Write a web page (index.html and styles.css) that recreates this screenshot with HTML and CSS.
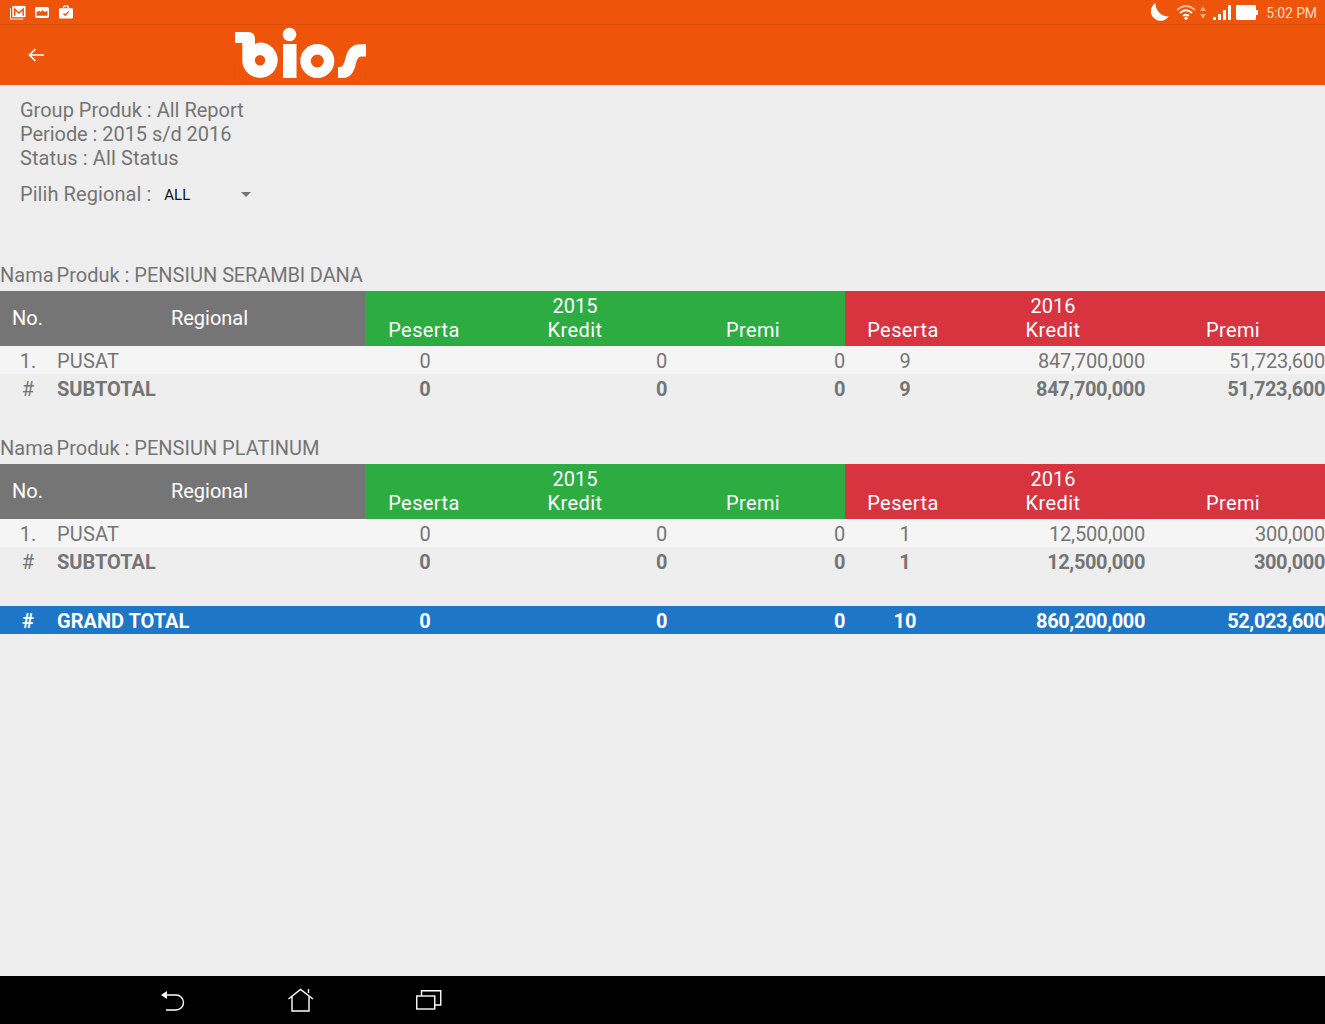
FILE: index.html
```html
<!DOCTYPE html>
<html lang="en">
<head>
    <meta charset="UTF-8">
    <meta name="viewport" content="width=device-width, initial-scale=1.0">
    <title>Bios Report</title>
    <link rel="stylesheet" href="styles.css">
</head>
<body>

    <div class="status-bar">
        <div class="status-left">
            <svg class="ico-mail" width="16" height="15" viewBox="0 0 17 15">
                <path d="M0.5 3 V14.5 H14" fill="none" stroke="#fff"/>
                <rect x="2.5" y="0.5" width="14" height="12" fill="#fff"/>
                <path d="M5 11 V4 L9.5 8 L14 4 V11" fill="none" stroke="#ee550a" stroke-width="1.6"/>
            </svg>
            <svg class="ico-photo" width="14" height="11" viewBox="0 0 15 12">
                <rect width="15" height="12" rx="1.5" fill="#fff"/>
                <path d="M1.5 9.5 V6 L4 4 L6 5.5 L8 3.5 L10.5 5.5 L13.5 4 V9.5 Z" fill="#ee550a"/>
            </svg>
            <svg class="ico-bag" width="14" height="14" viewBox="0 0 15 15">
                <path d="M5 3.5 V2.5 Q5 1 6.5 1 H8.5 Q10 1 10 2.5 V3.5" fill="none" stroke="#fff" stroke-width="1.4"/>
                <rect y="3.5" width="15" height="11" rx="1" fill="#fff"/>
                <path d="M4.8 9 L6.8 11 L10.4 6.8" fill="none" stroke="#ee550a" stroke-width="1.5"/>
            </svg>
        </div>
        <div class="status-right">
            <svg width="20" height="20" viewBox="0 0 20 20">
                <path d="M6.5 1 A9.6 9.6 0 1 0 19.5 14.5 A13 13 0 0 1 6.5 1 Z" fill="#fff"/>
            </svg>
            <svg class="ico-wifi" width="20" height="16" viewBox="0 0 20 16">
                <path d="M1 6 Q10 -2 19 6" fill="none" stroke="#f8b68f" stroke-width="1.8"/>
                <path d="M4 9 Q10 3.5 16 9" fill="none" stroke="#fff" stroke-width="1.8"/>
                <path d="M7 12 Q10 9.5 13 12" fill="none" stroke="#fff" stroke-width="1.8"/>
                <circle cx="10" cy="14.2" r="1.6" fill="#fff"/>
            </svg>
            <svg class="ico-arrows" width="6" height="13" viewBox="0 0 6 13">
                <path d="M3 0 L6 5 H0 Z M3 13 L6 8 H0 Z" fill="#f8a878"/>
            </svg>
            <svg class="ico-signal" width="19" height="15" viewBox="0 0 19 15">
                <rect x="0" y="12" width="3" height="3" fill="#fff"/>
                <rect x="5" y="9" width="3" height="6" fill="#fff"/>
                <rect x="10" y="5" width="3" height="10" fill="#fff"/>
                <rect x="15" y="0" width="3" height="15" fill="#fff"/>
            </svg>
            <svg class="ico-battery" width="22" height="15" viewBox="0 0 22 15">
                <rect width="20" height="15" rx="1" fill="#fff"/>
                <rect x="20" y="5" width="2" height="5" fill="#fff"/>
            </svg>
            <span class="clock">5:02 PM</span>
        </div>
    </div>

    <div class="app-bar">
        <svg class="back-arrow" width="16" height="14" viewBox="0 0 16 14">
            <path d="M16 7 H1.5 M7.5 1 L1.5 7 L7.5 13" fill="none" stroke="#fff" stroke-width="1.7"/>
        </svg>
        <svg class="logo" width="134" height="60" viewBox="234 25 134 60">
            <path d="M234.5 60 V72 Q234.5 82 244 82 H357 Q366.5 82 366.5 72 V60" fill="none" stroke="#ea540a"/>
            <path fill="#fff" fill-rule="evenodd" d="M235 31 H248 Q255 31 255 38 V43 Q257.5 41.5 260 41.5 A17.7 17.7 0 1 1 242.3 59.2 V42 H235 Z M260 54 A5.2 5.2 0 1 0 260 64.4 A5.2 5.2 0 1 0 260 54 Z"/>
            <circle cx="289.5" cy="33.5" r="6.8" fill="#fff"/>
            <rect x="283" y="43" width="13.5" height="34" fill="#fff"/>
            <path fill="#fff" fill-rule="evenodd" d="M317.3 43 A17 17 0 1 0 317.3 77 A17 17 0 1 0 317.3 43 Z M317.3 53.5 A6.5 6.5 0 1 1 317.3 66.5 A6.5 6.5 0 1 1 317.3 53.5 Z"/>
            <path fill="#fff" d="M366 43 V55.5 H361 Q357.5 56 356 62 Q353 77 343 77 H338 V66 H340 Q343.5 65.5 345 59 Q348 44 358 43.5 Z"/>
        </svg>
    </div>

    <div class="content">
        <div class="filter-info">
            <div>Group Produk : All Report</div>
            <div class="periode">Periode : 2015 s/d 2016</div>
            <div class="status-line">Status : All Status</div>
            <div class="region-row">
                <span class="region-label">Pilih Regional :</span>
                <span class="region-select">ALL<i class="caret"></i></span>
            </div>
        </div>

        <div class="product-name first"><span class="tight">Nama</span> Produk : PENSIUN <span class="squeeze">SERAMBI DANA</span></div>
        <div class="report-head">
            <div class="head-fixed"><span class="head-no">No.</span><span class="head-reg">Regional</span></div>
            <div class="head-year y2015">
                <span></span><span>2015</span><span></span>
                <span class="sub">Peserta</span><span class="sub">Kredit</span><span class="sub">Premi</span>
            </div>
            <div class="head-year y2016">
                <span></span><span>2016</span><span></span>
                <span class="sub">Peserta</span><span class="sub">Kredit</span><span class="sub">Premi</span>
            </div>
        </div>
        <div class="row">
            <span class="c">1.</span><span class="region">PUSAT</span><span class="c">0</span><span class="r">0</span><span class="r">0</span>
            <span class="c">9</span><span class="r">847,700,000</span><span class="r">51,723,600</span>
        </div>
        <div class="row subtotal">
            <span class="c">#</span><span>SUBTOTAL</span><span class="c">0</span><span class="r">0</span><span class="r">0</span>
            <span class="c">9</span><span class="r">847,700,000</span><span class="r">51,723,600</span>
        </div>

        <div class="product-name"><span class="tight">Nama</span> Produk : PENSIUN PLATINUM</div>
        <div class="report-head">
            <div class="head-fixed"><span class="head-no">No.</span><span class="head-reg">Regional</span></div>
            <div class="head-year y2015">
                <span></span><span>2015</span><span></span>
                <span class="sub">Peserta</span><span class="sub">Kredit</span><span class="sub">Premi</span>
            </div>
            <div class="head-year y2016">
                <span></span><span>2016</span><span></span>
                <span class="sub">Peserta</span><span class="sub">Kredit</span><span class="sub">Premi</span>
            </div>
        </div>
        <div class="row">
            <span class="c">1.</span><span class="region">PUSAT</span><span class="c">0</span><span class="r">0</span><span class="r">0</span>
            <span class="c">1</span><span class="r">12,500,000</span><span class="r">300,000</span>
        </div>
        <div class="row subtotal">
            <span class="c">#</span><span>SUBTOTAL</span><span class="c">0</span><span class="r">0</span><span class="r">0</span>
            <span class="c">1</span><span class="r">12,500,000</span><span class="r">300,000</span>
        </div>

        <div class="row grand">
            <span class="c">#</span><span>GRAND TOTAL</span><span class="c">0</span><span class="r">0</span><span class="r">0</span>
            <span class="c">10</span><span class="r">860,200,000</span><span class="r">52,023,600</span>
        </div>
    </div>

    <div class="nav-bar">
        <svg width="26" height="24" viewBox="0 0 26 24">
            <path d="M1 7 L7 3 V11 Z" fill="#fff"/>
            <path d="M7 7 H16 A7.5 7.5 0 0 1 16 22 H6" fill="none" stroke="#fff" stroke-width="1.4"/>
        </svg>
        <svg width="26" height="24" viewBox="0 0 26 24">
            <path d="M0.5 11 L12.5 1.5 L25 11 M4 8.5 V23 H21 V8.5 M20.5 1 V5" fill="none" stroke="#fff" stroke-width="1.4"/>
        </svg>
        <svg width="26" height="24" viewBox="0 0 26 24">
            <rect x="0.75" y="8" width="18" height="13" fill="none" stroke="#fff" stroke-width="1.4"/>
            <path d="M5.5 8 V2.75 H24.75 V17 H19" fill="none" stroke="#fff" stroke-width="1.4"/>
        </svg>
    </div>

</body>
</html>
```

FILE: styles.css
```css
body {
    margin: 0;
    height: 1024px;
    overflow: hidden;
    display: flex;
    flex-direction: column;
    background-color: #eeeeee;
    color: #757575;
    font-family: Roboto, sans-serif;
    font-size: 20px;
    line-height: 24px;
}
.status-bar {
    height: 25px;
    box-sizing: border-box;
    border-bottom: 1px solid #d94e09;
    background-color: #ee550a;
    display: flex;
    justify-content: space-between;
    align-items: center;
    padding: 0 8px 0 10px;
}
.status-left {
    display: flex;
    align-items: center;
}
.ico-photo {
    margin-left: 9px;
}
.ico-bag {
    margin-left: 10px;
}
.status-right {
    display: flex;
    align-items: center;
}
.ico-wifi {
    margin-left: 7px;
}
.ico-arrows {
    margin-left: 4px;
}
.ico-signal {
    margin-left: 7px;
}
.ico-battery {
    margin-left: 4px;
}
.clock {
    margin-left: 8px;
    padding-top: 2px;
    font-size: 14px;
    letter-spacing: -0.1px;
    color: #fbdcc9;
}
.app-bar {
    height: 60px;
    background-color: #ee550a;
    display: flex;
    align-items: center;
}
.back-arrow {
    margin-left: 28px;
}
.logo {
    margin-left: 190px;
    margin-top: 2px;
}
.content {
    flex: 1;
}
.filter-info {
    padding: 13px 0 0 20px;
}
.periode {
    letter-spacing: -0.05px;
}
.status-line {
    letter-spacing: 0.1px;
}
.region-row {
    display: flex;
    align-items: center;
    margin-top: 12px;
    height: 23px;
}
.region-label {
    letter-spacing: 0.07px;
}
.region-select {
    position: relative;
    margin-left: 13px;
    width: 87px;
    font-size: 15px;
    color: #111111;
    margin-top: 2px;
}
.caret {
    position: absolute;
    right: 0;
    top: 9px;
    border-left: 5px solid transparent;
    border-right: 5px solid transparent;
    border-top: 5px solid #757575;
}
.product-name {
    margin-top: 34px;
    margin-bottom: 4px;
}
.product-name.first {
    margin-top: 58px;
}
.tight {
    margin-right: -2px;
}
.squeeze {
    letter-spacing: -0.15px;
}
.report-head {
    display: flex;
    height: 55px;
    color: #ffffff;
}
.head-fixed {
    width: 365px;
    box-sizing: border-box;
    padding-bottom: 2px;
    background-color: #757575;
    display: flex;
    align-items: center;
}
.head-no {
    width: 54px;
    padding-left: 12px;
    box-sizing: border-box;
}
.head-reg {
    flex: 1;
    text-align: center;
}
.head-year {
    width: 480px;
    box-sizing: border-box;
    padding-top: 3px;
    display: grid;
    grid-auto-rows: 24px;
    text-align: center;
}
.head-year .sub {
    letter-spacing: 0.4px;
}
.y2015 {
    background-color: #2dac42;
    grid-template-columns: 118px 184px 172px 6px;
}
.y2016 {
    background-color: #d8343f;
    grid-template-columns: 116px 184px 176px 4px;
}
.head-year span:nth-child(3) {
    grid-column: 3 / 5;
}
.head-year span:nth-child(4) {
    grid-column: 1;
}
.row {
    display: grid;
    grid-template-columns: 57px 308px 120px 182px 178px 120px 180px 180px;
    height: 28px;
    box-sizing: border-box;
    padding-top: 2px;
    align-items: center;
    background-color: #f5f5f5;
}
.row .c {
    text-align: center;
}
.row .c:first-child {
    padding-right: 1px;
}
.row .r {
    text-align: right;
    letter-spacing: -0.18px;
}
.row .region {
    letter-spacing: 0.2px;
}
.subtotal {
    background-color: transparent;
    font-weight: 700;
}
.subtotal .r,
.grand .r {
    letter-spacing: -0.38px;
}
.subtotal span:first-child {
    font-weight: 400;
}
.grand {
    margin-top: 31px;
    background-color: #1e76c6;
    color: #ffffff;
    font-weight: 700;
}
.nav-bar {
    height: 48px;
    background-color: #000000;
    display: flex;
    align-items: center;
    gap: 102px;
    padding-left: 160px;
}
```
